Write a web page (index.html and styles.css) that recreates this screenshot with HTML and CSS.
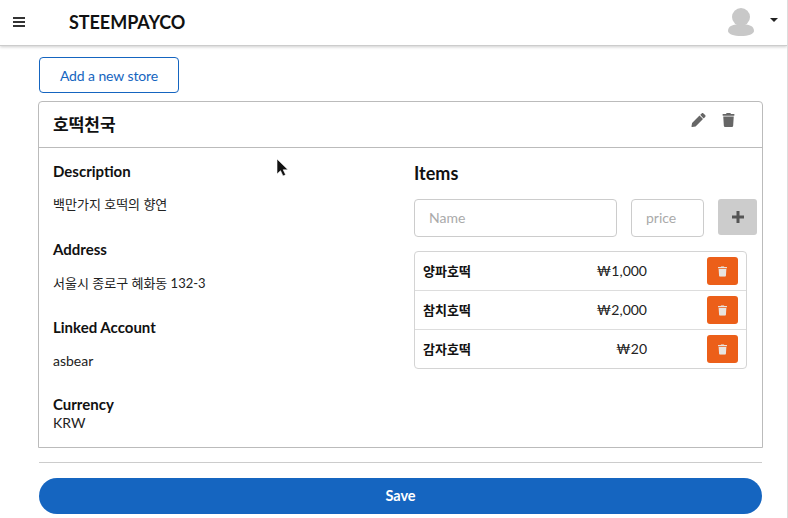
FILE: index.html
```html
<!DOCTYPE html>
<html lang="ko">
<head>
<meta charset="utf-8">
<title>STEEMPAYCO</title>
<link rel="stylesheet" href="styles.css">
</head>
<body>
<svg class="sprites" width="0" height="0" aria-hidden="true">
  <symbol id="trash" viewBox="0 0 448 512"><path d="M432 32H312l-9.400-18.700A24 24 0 0 0 281.100 0H166.800a23.700 23.700 0 0 0-21.400 13.300L136 32H16A16 16 0 0 0 0 48v32a16 16 0 0 0 16 16h416a16 16 0 0 0 16-16V48a16 16 0 0 0-16-16zM53.200 467a48 48 0 0 0 47.900 45h245.800a48 48 0 0 0 47.900-45L416 128H32z"/></symbol>
</svg>
<header class="navbar">
  <svg class="burger" viewBox="0 0 12 10" aria-hidden="true"><path d="M0 0h12v2H0zM0 4h12v2H0zM0 8h12v2H0z"/></svg>
  <span class="brand">STEEMPAYCO</span>
  <div class="user">
    <svg class="avatar" viewBox="0 0 26 28" aria-hidden="true"><circle cx="13" cy="9" r="9"/><path d="M0 23c0-5 5-7 13-7s13 2 13 7c0 3-6 5-13 5S0 26 0 23z"/></svg>
    <span class="caret"></span>
  </div>
</header>
<main class="page">
  <button class="add-store">Add a new store</button>
  <section class="card">
    <div class="card-head">
      <h2>호떡천국</h2>
      <div class="card-tools">
        <svg class="tool" viewBox="0 0 512 512" aria-hidden="true"><path d="M497.900 142.100l-46.100 46.100a12 12 0 0 1-17 0l-111-111a12 12 0 0 1 0-17l46.100-46.100a48.100 48.100 0 0 1 67.900 0l60.100 60.100a47.900 47.900 0 0 1 0 67.900zM284.200 99.800L21.600 362.400 .4 483.900a24 24 0 0 0 27.800 27.800l121.500-21.300 262.600-262.600a12 12 0 0 0 0-17l-111-111a12.100 12.100 0 0 0-17.100 0z"/></svg>
        <svg class="tool" viewBox="0 0 448 512" aria-hidden="true"><use href="#trash"/></svg>
      </div>
    </div>
    <div class="card-body">
      <div class="details">
        <div class="field first"><h3>Description</h3><p>백만가지 호떡의 향연</p></div>
        <div class="field"><h3>Address</h3><p>서울시 종로구 혜화동 132-3</p></div>
        <div class="field"><h3>Linked Account</h3><p class="latin">asbear</p></div>
        <div class="field tight"><h3>Currency</h3><p>KRW</p></div>
      </div>
      <div class="items">
        <h3 class="items-title">Items</h3>
        <div class="item-form">
          <input class="input name" placeholder="Name">
          <input class="input price" placeholder="price">
          <button class="add-item" aria-label="Add"><svg viewBox="0 0 12 12" aria-hidden="true"><path d="M4.500 0h3v4.500H12v3H7.500V12h-3V7.500H0v-3h4.500z"/></svg></button>
        </div>
        <ul class="item-list">
          <li><span class="item-name">양파호떡</span><span class="item-price">₩1,000</span><button class="del" aria-label="Delete"><svg viewBox="0 0 448 512" aria-hidden="true"><use href="#trash"/></svg></button></li>
          <li><span class="item-name">참치호떡</span><span class="item-price">₩2,000</span><button class="del" aria-label="Delete"><svg viewBox="0 0 448 512" aria-hidden="true"><use href="#trash"/></svg></button></li>
          <li><span class="item-name">감자호떡</span><span class="item-price">₩20</span><button class="del" aria-label="Delete"><svg viewBox="0 0 448 512" aria-hidden="true"><use href="#trash"/></svg></button></li>
        </ul>
      </div>
    </div>
    <svg class="cursor" viewBox="0 0 12 18" aria-hidden="true"><path d="M1 0v15l3.500-3.300L7 17l2.600-1.200L7.200 10.800H12z" stroke="#fff" stroke-width=".6"/></svg>
  </section>
  <hr class="divider">
  <button class="save">Save</button>
</main>
</body>
</html>
```
FILE: styles.css
```css
* { box-sizing: border-box; }
html, body { margin: 0; height: 100%; }
body {
  background: #fff;
  color: #111;
  font-family: Lato, "Noto Sans CJK KR", sans-serif;
  font-size: 14px;
  overflow: hidden;
  border-right: 1px solid #ddd;
}
.sprites { position: absolute; }
.navbar {
  height: 46px;
  display: flex;
  align-items: center;
  padding: 0 9px 0 13px;
  background: #fff;
  border-bottom: 1px solid #ccc;
  box-shadow: 0 1px 3px rgba(0,0,0,.2);
}
.burger { width: 12px; height: 10px; fill: #333; margin-top: -2px; }
.brand {
  margin-left: 44px;
  margin-bottom: 2px;
  font-size: 18px;
  font-weight: 700;
  letter-spacing: -.05px;
  color: #111;
}
.user { margin-left: auto; display: flex; align-items: center; gap: 16px; }
.avatar { width: 26px; height: 28px; fill: #c8c8c8; margin-top: -1px; }
.caret {
  width: 0; height: 0;
  border-left: 4px solid transparent;
  border-right: 4px solid transparent;
  border-top: 4px solid #222;
  margin-top: -5px;
}
.page { padding: 11px 25px 0 39px; }
.add-store {
  display: block;
  width: 140px;
  height: 36px;
  padding: 0;
  background: #fff;
  border: 1px solid #1565c0;
  border-radius: 4px;
  color: #1565c0;
  font: 400 14px Lato, sans-serif;
  letter-spacing: -.1px;
}
.card {
  position: relative;
  width: 725px;
  height: 347px;
  margin: 8px 0 0 -1px;
  border: 1px solid #bbb;
  border-radius: 4px 4px 0 0;
}
.card-head {
  height: 46px;
  display: flex;
  justify-content: space-between;
  padding: 0 27px 0 14px;
  border-bottom: 1px solid #bbb;
}
.card-head h2 {
  margin: 0;
  font-size: 17px;
  font-weight: 700;
  line-height: 46px;
}
.card-tools { display: flex; gap: 16px; padding-top: 11px; }
.tool { width: 15px; height: 14px; fill: #666; }
.tool + .tool { width: 13px; }
.card-body { display: flex; padding: 13px 0 0 14px; }
.details { width: 361px; }
.field { margin-bottom: 24px; }
.field h3 { margin: 0; font-size: 15px; font-weight: 700; line-height: 20px; color: #111; }
.field p { margin: 14px 0 0; font-size: 13px; line-height: 20px; color: #222; }
.field.first { margin-bottom: 25px; }
.field.first p { margin-top: 13px; }
.field p.latin { font-size: 14px; }
.field.tight { margin: -1px 0 0; }
.field.tight p { margin: 0; font-size: 14px; line-height: 18px; }
.items { width: 343px; padding-top: 1px; }
.items-title { margin: -1px 0 14px; font-size: 18px; font-weight: 700; line-height: 24px; }
.item-form { display: flex; align-items: flex-start; gap: 14px; }
.input {
  height: 38px;
  padding: 0 14px 2px;
  border: 1px solid #ccc;
  border-radius: 4px;
  background: #fff;
  font: 400 14px Lato, sans-serif;
}
.input::placeholder { color: #aaa; opacity: 1; }
.name { width: 203px; }
.price { width: 73px; }
.add-item {
  width: 39px;
  height: 36px;
  padding: 0;
  display: flex;
  align-items: center;
  justify-content: center;
  background: #ccc;
  border: 0;
  border-radius: 3px;
}
.add-item svg { width: 12px; height: 12px; fill: #555; }
.item-list {
  list-style: none;
  width: 333px;
  margin: 14px 0 0;
  padding: 0;
  border: 1px solid #d4d4d4;
  border-radius: 4px;
}
.item-list li {
  height: 39px;
  display: flex;
  align-items: center;
  padding: 0 8px;
  border-top: 1px solid #ddd;
}
.item-list li:first-child { border-top: 0; height: 38px; }
.item-name { font-size: 13px; font-weight: 700; color: #111; width: 80px; padding-bottom: 2px; }
.item-price { width: 144px; text-align: right; font-size: 14px; color: #222; padding-bottom: 2px; }
.del {
  width: 31px;
  height: 28px;
  margin-left: 60px;
  padding: 0;
  display: flex;
  align-items: center;
  justify-content: center;
  background: #ec5f19;
  border: 0;
  border-radius: 3px;
}
.del svg { width: 9px; height: 11px; fill: #e8e4e0; }
.cursor { position: absolute; left: 237px; top: 57px; width: 12px; height: 18px; fill: #111; }
.divider { width: 723px; margin: 14px 0 15px; border: 0; border-top: 1px solid #ccc; }
.save {
  display: block;
  width: 723px;
  height: 36px;
  padding: 0 0 2px;
  background: #1565c0;
  border: 0;
  border-radius: 18px;
  color: #fff;
  font: 700 14.500px Lato, sans-serif;
}
```
